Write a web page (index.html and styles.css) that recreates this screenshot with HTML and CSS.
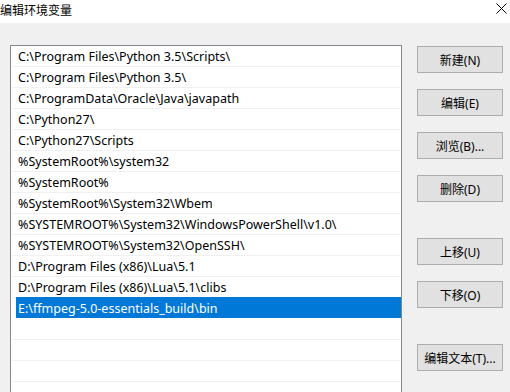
FILE: index.html
```html
<!DOCTYPE html>
<html lang="zh-CN">
<head>
  <meta charset="UTF-8">
  <title>编辑环境变量</title>
  <link rel="stylesheet" href="styles.css">
</head>
<body>
<div class="dialog">
  <div class="titlebar">
    <span class="title">编辑环境变量</span>
    <svg class="close" width="11" height="11" viewBox="0 0 11 11">
      <path d="M0.5 0.5 L10.5 10.5 M10.5 0.5 L0.5 10.5" stroke="#000" stroke-width="1" fill="none"/>
    </svg>
  </div>

  <div class="dialog-body">
    <div class="path-list">
      <div class="row"><span class="cell">C:\Program Files\Python 3.5\Scripts\</span></div>
      <div class="row"><span class="cell">C:\Program Files\Python 3.5\</span></div>
      <div class="row"><span class="cell">C:\ProgramData\Oracle\Java\javapath</span></div>
      <div class="row"><span class="cell">C:\Python27\</span></div>
      <div class="row"><span class="cell">C:\Python27\Scripts</span></div>
      <div class="row"><span class="cell">%SystemRoot%\system32</span></div>
      <div class="row"><span class="cell">%SystemRoot%</span></div>
      <div class="row"><span class="cell">%SystemRoot%\System32\Wbem</span></div>
      <div class="row"><span class="cell">%SYSTEMROOT%\System32\WindowsPowerShell\v1.0\</span></div>
      <div class="row"><span class="cell">%SYSTEMROOT%\System32\OpenSSH\</span></div>
      <div class="row"><span class="cell">D:\Program Files (x86)\Lua\5.1</span></div>
      <div class="row"><span class="cell">D:\Program Files (x86)\Lua\5.1\clibs</span></div>
      <div class="row selected"><span class="cell">E:\ffmpeg-5.0-essentials_build\bin</span></div>
      <div class="row"><span class="cell"></span></div>
      <div class="row"><span class="cell"></span></div>
      <div class="row"><span class="cell"></span></div>
      <div class="row"><span class="cell"></span></div>
    </div>

    <div class="actions">
      <button class="btn">新建(N)</button>
      <button class="btn">编辑(E)</button>
      <button class="btn">浏览(B)...</button>
      <button class="btn">删除(D)</button>
      <button class="btn group-start">上移(U)</button>
      <button class="btn">下移(O)</button>
      <button class="btn group-start">编辑文本(T)...</button>
    </div>
  </div>
</div>
</body>
</html>
```

FILE: styles.css
```css
:root {
  --face: #f0f0f0;
  --list-border: #828790;
  --row-line: #f0f0f0;
  --select: #0078d7;
  --btn: #e1e1e1;
  --btn-border: #adadad;
  --text: #000000;
}

* {
  margin: 0;
  padding: 0;
  box-sizing: border-box;
}

html, body {
  height: 100%;
  overflow: hidden;
}

body {
  font-family: "Noto Sans", "Noto Sans CJK SC", sans-serif;
  font-size: 12px;
  color: var(--text);
  background: var(--face);
}

.dialog {
  height: 100%;
  display: flex;
  flex-direction: column;
}

.titlebar {
  height: 23px;
  flex: none;
  background: #ffffff;
  display: flex;
  align-items: center;
  justify-content: space-between;
  padding-right: 3px;
}

.title {
  font-family: "Noto Sans CJK SC", sans-serif;
  line-height: 16px;
  margin-top: -4px;
}

.close {
  display: block;
  margin-top: -6px;
}

.dialog-body {
  flex: 1;
  min-height: 0;
  display: flex;
  align-items: flex-start;
  gap: 15px;
  padding: 22px 0 0 10px;
}

.path-list {
  width: 392px;
  height: 347px;
  flex: none;
  background: #ffffff;
  border: 1px solid var(--list-border);
  border-bottom: none;
  padding: 0 1px;
  overflow: hidden;
}

.row {
  height: 21px;
  border-bottom: 1px solid var(--row-line);
  display: flex;
}

.cell {
  flex: 1;
  margin-left: 4px;
  margin-right: -1px;
  padding-left: 2px;
  padding-top: 1px;
  font-size: 12.5px;
  line-height: 20px;
  white-space: nowrap;
}

.row.selected {
  border-bottom-color: transparent;
}

.row.selected .cell {
  background: var(--select);
  color: #ffffff;
  margin-top: -1px;
  height: 21px;
  line-height: 22px;
}

.actions {
  width: 86px;
  flex: none;
  display: flex;
  flex-direction: column;
  gap: 16px;
  margin-top: 1px;
}

.btn {
  height: 27px;
  flex: none;
  background: var(--btn);
  border: 1px solid var(--btn-border);
  font-family: inherit;
  font-size: 12px;
  color: var(--text);
  white-space: nowrap;
}

.btn.group-start {
  margin-top: 20px;
}
```
